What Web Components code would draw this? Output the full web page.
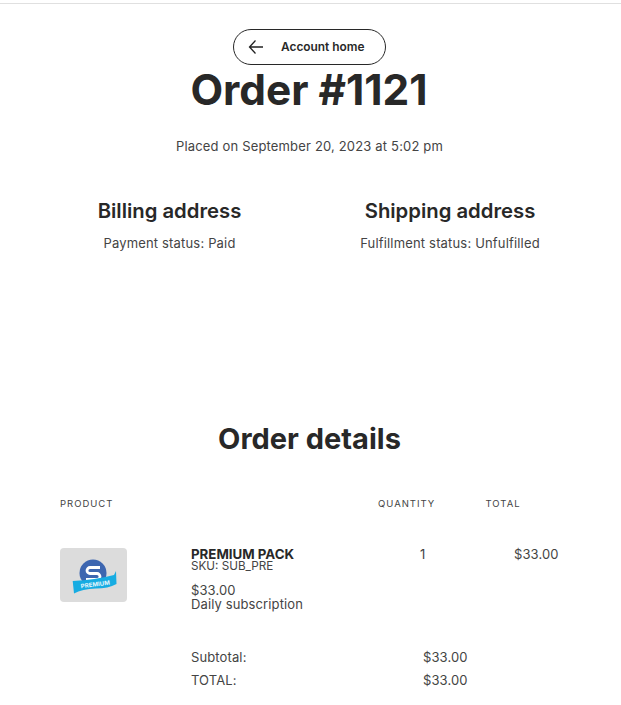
<!DOCTYPE html>
<html>
<head>
<meta charset="utf-8">
<style>
  html, body { margin: 0; padding: 0; background: #fff; }
  body { font-family: Inter, "Liberation Sans", sans-serif; color: #282828; }
</style>
</head>
<body>
<order-page>
  <order-header number="1121" placed="Placed on September 20, 2023 at 5:02 pm"></order-header>
  <order-addresses></order-addresses>
  <order-details></order-details>
</order-page>

<script>
class OrderPage extends HTMLElement {
  constructor() {
    super();
    let shadowRoot = this.attachShadow({mode: 'open'});
    shadowRoot.innerHTML = `
    <style>
      :host { display: block; height: 701px; overflow: hidden; box-sizing: border-box; margin-top: 3px; border-top: 1px solid #e0e0e0; padding-right: 2px; }
    </style>
    <slot></slot>
    `;
  }
}
customElements.define('order-page', OrderPage);

class OrderHeader extends HTMLElement {
  constructor() {
    super();
    let shadowRoot = this.attachShadow({mode: 'open'});
    shadowRoot.innerHTML = `
    <style>
      :host { display: flex; flex-direction: column; align-items: center; padding-top: 25px; }
      a {
        display: flex; align-items: center; gap: 17px;
        box-sizing: border-box; width: 153px; height: 36px; padding-left: 14px; padding-bottom: 1px;
        border: 1px solid #282828; border-radius: 18px;
        font-size: 11.9px; font-weight: 600; color: #282828; text-decoration: none;
      }
      svg { display: block; width: 16px; height: 16px; }
      h1 { margin: 0 1px 0 0; font-size: 42.4px; line-height: 50px; font-weight: 700; }
      p { margin: 21px 0 0; font-size: 13px; line-height: 20px; letter-spacing: .17px; color: #444; }
    </style>
    <a href="#">
      <svg viewBox="0 0 16 16" fill="none" stroke="#222" stroke-width="1.300"><path d="M15 8H1.500M7.500 1.500 1.500 8l6 6.500"/></svg>
      <span>Account home</span>
    </a>
    <h1>Order #${this.getAttribute('number')}</h1>
    <p>${this.getAttribute('placed')}</p>
    `;
  }
}
customElements.define('order-header', OrderHeader);

class OrderAddresses extends HTMLElement {
  constructor() {
    super();
    let shadowRoot = this.attachShadow({mode: 'open'});
    shadowRoot.innerHTML = `
    <style>
      :host { display: grid; grid-template-columns: 339px 222px; padding-top: 41px; text-align: center; }
      h2 { margin: 0; font-size: 20.3px; line-height: 28px; font-weight: 600; }
      p { margin: 9px 0 0; font-size: 13px; line-height: 18px; letter-spacing: .17px; color: #444; }
    </style>
    <div><h2>Billing address</h2><p>Payment status: Paid</p></div>
    <div><h2>Shipping address</h2><p>Fulfillment status: Unfulfilled</p></div>
    `;
  }
}
customElements.define('order-addresses', OrderAddresses);

class OrderDetails extends HTMLElement {
  constructor() {
    super();
    let shadowRoot = this.attachShadow({mode: 'open'});
    shadowRoot.innerHTML = `
    <style>
      :host { display: block; padding: 168px 0 0 60px; font-size: 13px; letter-spacing: .12px; color: #444; }
      h2 { margin: 0 0 0 -60px; text-align: center; font-size: 29px; line-height: 38px; font-weight: 700; letter-spacing: 0; color: #282828; }
      .heads { display: grid; grid-template-columns: 318px 107.500px auto; margin-top: 40px; font-size: 9.500px; line-height: 12px; letter-spacing: 1px; color: #444; }
      .item { display: grid; grid-template-columns: 131px 229px 94px auto; margin-top: 38px; line-height: 14px; }
      .thumb { width: 67px; height: 54px; background: #dcdcdc; border-radius: 4px; }
      .thumb svg { display: block; }
      .name { font-weight: 700; font-size: 13.300px; line-height: 13px; color: #282828; letter-spacing: 0; }
      .sku { font-size: 11.700px; line-height: 10px; letter-spacing: 0; }
      .price { margin-top: 12px; }
      .cell { line-height: 13px; }
      .totals { display: grid; grid-template-columns: 232px auto; margin: 38px 0 0 131px; row-gap: 7px; line-height: 16px; }
    </style>
    <h2>Order details</h2>
    <div class="heads"><span>PRODUCT</span><span>QUANTITY</span><span>TOTAL</span></div>
    <div class="item">
      <div class="thumb">
        <svg width="67" height="54" viewBox="0 0 67 54">
          <circle cx="33" cy="25" r="13.500" fill="#3d66b0"/>
          <path d="M40 19.500H30a3 3 0 0 0 0 6h7a3 3 0 0 1 0 6H26" fill="none" stroke="#fff" stroke-width="2.800"/>
          <path d="M12.700 33Q35 32 54 27L56 23 56.500 36Q48 40.500 36 40.500 22 41 14 45.500Z" fill="#17ace2"/>
          <text x="20.500" y="38.500" transform="rotate(-7 35 36)" font-family="Inter, sans-serif" font-size="6" font-weight="700" fill="#e4f6fd">PREMIUM</text>
        </svg>
      </div>
      <div>
        <div class="name">PREMIUM PACK</div>
        <div class="sku">SKU: SUB_PRE</div>
        <div class="price">$33.00</div>
        <div>Daily subscription</div>
      </div>
      <div class="cell">1</div>
      <div class="cell">$33.00</div>
    </div>
    <div class="totals">
      <span>Subtotal:</span><span>$33.00</span>
      <span>TOTAL:</span><span>$33.00</span>
    </div>
    `;
  }
}
customElements.define('order-details', OrderDetails);
</script>
</body>
</html>
